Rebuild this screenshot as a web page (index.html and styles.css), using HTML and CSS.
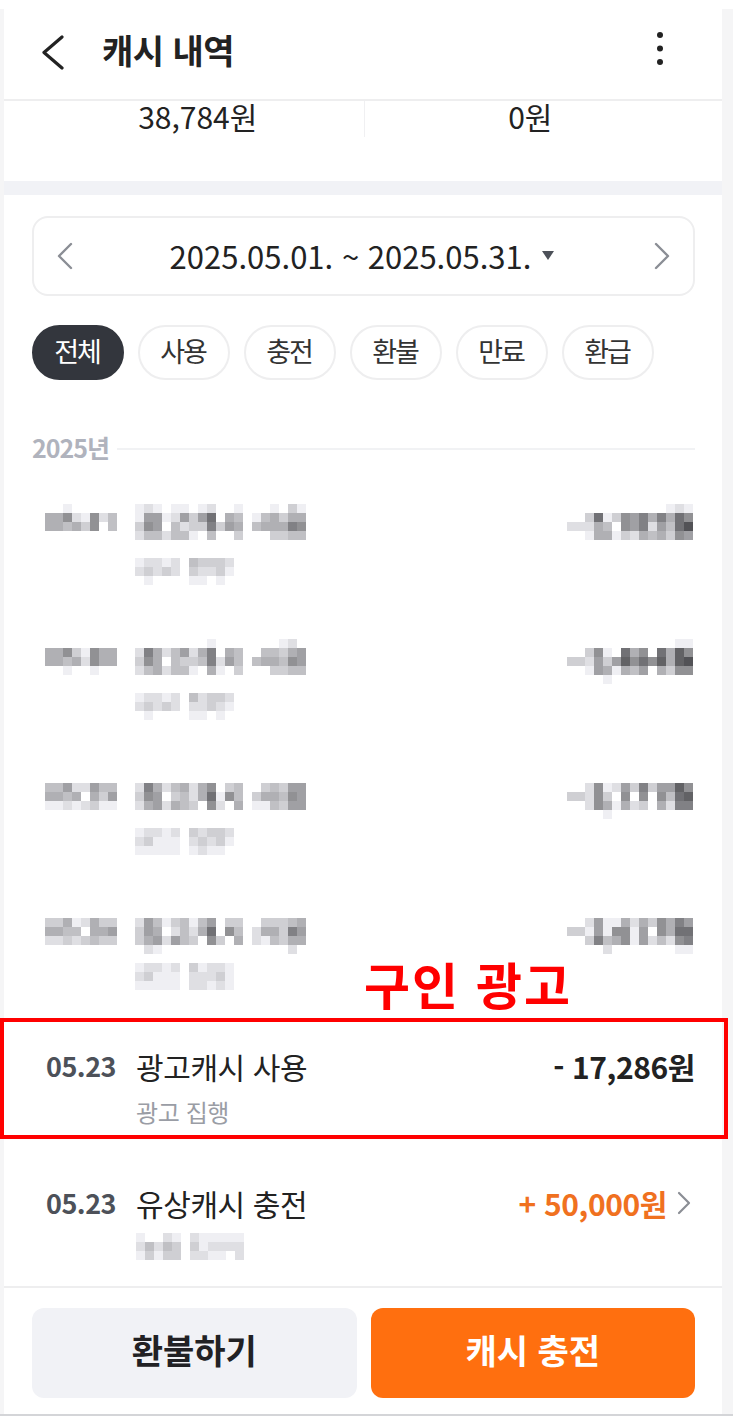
FILE: index.html
```html
<!DOCTYPE html>
<html lang="ko">
<head>
    <meta charset="UTF-8">
    <meta name="viewport" content="width=device-width, initial-scale=1.0">
    <title>캐시 내역</title>
    <link rel="stylesheet" href="styles.css">
</head>
<body>
    <div class="frame">
        <div class="app">
            <header class="top-bar">
                <svg class="back" width="24" height="36" viewBox="0 0 24 36"><path d="M21 2 L3 17.5 L21 33"/></svg>
                <h1>캐시 내역</h1>
                <svg class="more" width="8" height="36" viewBox="0 0 8 36"><circle cx="4" cy="4" r="3"/><circle cx="4" cy="17.5" r="3"/><circle cx="4" cy="31" r="3"/></svg>
            </header>

            <div class="summary">
                <div class="summary-cell">38,784원</div>
                <div class="summary-cell">0원</div>
            </div>
            <div class="strip"></div>

            <section class="content">
                <div class="period">
                    <svg class="arrow" width="18" height="28" viewBox="0 0 18 28"><path d="M15 2 L3 14 L15 26"/></svg>
                    <div class="period-label">2025.05.01. ~ 2025.05.31.<span class="caret"></span></div>
                    <svg class="arrow" width="18" height="28" viewBox="0 0 18 28"><path d="M3 2 L15 14 L3 26"/></svg>
                </div>

                <div class="chips">
                    <span class="chip active">전체</span>
                    <span class="chip">사용</span>
                    <span class="chip">충전</span>
                    <span class="chip">환불</span>
                    <span class="chip">만료</span>
                    <span class="chip">환급</span>
                </div>

                <div class="year"><span>2025년</span><i></i></div>

                <div class="list">
                    <!-- rows hidden behind the mosaic in the original -->
                    <div class="row row-first">
                        <div class="mosaic date" data-rows="ffefffff aa8de8db aabac8fb ffffffff"></div>
                        <div class="main">
                            <div class="mosaic" data-rows="edefeefedffefffefce e99ed9c96fabfebacaa c89fbdcc7c9afbaaa78 dbbdbbefbffcfffccbb f f"></div>
                            <div class="mosaic" data-rows="eddedfbcccd dcdcdfcddce feffffeefef"></div>
                        </div>
                        <div class="mosaic amount" data-rows="fffffffffffede ffc6ec897a7a68 dddabf897d9b64 ffeaaecdabac89"></div>
                    </div>
                    <div class="row">
                        <div class="mosaic date" data-rows="ffffffff aa8ce8aa aabad8aa ffeffeff"></div>
                        <div class="main">
                            <div class="mosaic" data-rows="ffffffffefffffffedf d7adb9da7fabffbbca9 c8afbccb7d9bfbaab89 dbadbbefaefcfffccbb f f"></div>
                            <div class="mosaic" data-rows="eddedfbdccd dcdcdfddcde feffffeefef"></div>
                        </div>
                        <div class="mosaic amount" data-rows="ffffffffffffee ffc8ef6a8f6a58 ccd9c958685a54 ffe9aeab9fac88 ffffefffffffff"></div>
                    </div>
                    <div class="row">
                        <div class="mosaic date" data-rows="bb9dd9bb aabafac9 eededcee"></div>
                        <div class="main">
                            <div class="mosaic" data-rows="d7adbada8fcbffcbc99 c89fcbda6e8bfcaab89 da9dabcf8dfafeebc99 f f"></div>
                            <div class="mosaic" data-rows="eddedfcdccd dceeefdcdce eeeeefedeef"></div>
                        </div>
                        <div class="mosaic amount" data-rows="ffd8ed9c7c9958 ccd8cf8f8f8b65 ffd8aeadcfad77 ffffefffffffff"></div>
                    </div>
                    <div class="row row-last">
                        <div class="mosaic date" data-rows="ccaedacc aabbfaa9 ddcdcbcc"></div>
                        <div class="main">
                            <div class="mosaic" data-rows="d9becbeb9fccffcccba c9afdbda6f8bfdaac79 ca9d9bcf8cfafdebcaa fdeffffffffffffffdf f"></div>
                            <div class="mosaic" data-rows="eddedfcedde dceeefdddce eeeeefddede"></div>
                        </div>
                        <div class="mosaic amount" data-rows="ffd9eeadac8a79 cce9e88e9f8a66 ffc7ba8e9dbd87 ffffdfffffffee"></div>
                    </div>

                    <div class="row row-text">
                        <div class="date">05.23</div>
                        <div class="main">
                            <div class="title">광고캐시 사용</div>
                            <div class="sub">광고 집행</div>
                        </div>
                        <div class="price">- 17,286원</div>
                    </div>
                    <div class="row row-text">
                        <div class="date">05.23</div>
                        <div class="main">
                            <div class="title">유상캐시 충전</div>
                            <div class="mosaic sub-mosaic" data-rows="effdefdeeeee dbdbcfcedddd ececcfddeefd"></div>
                        </div>
                        <div class="price plus">+ 50,000원<svg class="go" width="14" height="24" viewBox="0 0 14 24"><path d="M2 2 L12 12 L2 22"/></svg></div>
                    </div>
                </div>
            </section>

            <footer class="actions">
                <button class="btn">환불하기</button>
                <button class="btn primary">캐시 충전</button>
            </footer>
        </div>
    </div>

    <!-- red annotation drawn over the screenshot -->
    <div class="note">구인 광고</div>
    <div class="note-box"></div>

    <script src="mosaic.js"></script>
</body>
</html>
```

FILE: styles.css
```css
* { box-sizing: border-box; }
html, body { height: 100%; }
body {
    margin: 0;
    background: #fff;
    font-family: "Noto Sans CJK KR", "Noto Sans", sans-serif;
    color: #222;
    overflow: hidden;
    position: relative;
}
.frame {
    margin-top: 9px;
    height: 1407px;
    padding: 0 11px 0 4px;
    background: #f5f5f6;
    border-bottom: 2px solid #d4d5d8;
}
.app {
    height: 100%;
    background: #fff;
    display: flex;
    flex-direction: column;
}

/* header */
.top-bar {
    height: 92px;
    flex: none;
    display: flex;
    align-items: center;
    padding: 0 58px 0 37px;
    border-bottom: 2px solid #eeeeef;
}
.top-bar h1 {
    margin: 0 0 8px 37px;
    flex: 1;
    font-size: 34px;
    font-weight: 700;
    letter-spacing: -0.5px;
    line-height: 40px;
    color: #222;
}
.back { margin-bottom: 2px; }
.back path { fill: none; stroke: #222; stroke-width: 3.2; stroke-linecap: round; stroke-linejoin: round; }
.more { fill: #222; margin-bottom: 10px; }

/* summary */
.summary {
    height: 80px;
    flex: none;
    display: flex;
    align-items: flex-start;
}
.summary-cell {
    flex: 1;
    height: 36px;
    line-height: 30px;
    font-size: 30px;
    text-align: center;
    padding-right: 26px;
}
.summary-cell:first-child {
    padding: 0 0 0 28px;
    border-right: 1px solid #f0f0f2;
}
.strip { height: 14px; flex: none; background: #f1f2f6; }

/* period + filters */
.content {
    flex: 1;
    min-height: 0;
    overflow: hidden;
    padding: 21px 27px 0 28px;
}
.period {
    height: 80px;
    border: 2px solid #eeeeef;
    border-radius: 16px;
    display: flex;
    align-items: center;
    justify-content: space-between;
    padding: 0 22px;
}
.period-label {
    font-size: 31px;
    color: #222;
    display: flex;
    align-items: center;
    margin: 0 3px 1px 0;
}
.caret {
    width: 0;
    height: 0;
    margin-left: 11px;
    border-left: 6px solid transparent;
    border-right: 6px solid transparent;
    border-top: 9px solid #4d5159;
}
.arrow path { fill: none; stroke: #8b8e95; stroke-width: 2.4; stroke-linecap: round; stroke-linejoin: round; }
.chips {
    display: flex;
    gap: 14px;
    margin-top: 29px;
}
.chip {
    width: 92px;
    height: 55px;
    padding: 0 2px 4px 0;
    border: 2px solid #eeeeef;
    border-radius: 28px;
    display: flex;
    align-items: center;
    justify-content: center;
    font-size: 27px;
    letter-spacing: -2px;
    color: #333;
}
.chip.active {
    background: #33363d;
    border-color: #33363d;
    color: #fff;
}
.year {
    display: flex;
    align-items: center;
    gap: 8px;
    height: 28px;
    margin-top: 55px;
    font-size: 25px;
    font-weight: 700;
    letter-spacing: -1px;
    color: #b0b3bd;
}
.year span { margin-top: -4px; }
.year i {
    flex: 1;
    height: 2px;
    background: #f1f2f4;
}

/* history list */
.list { margin-top: 41px; }
.row {
    display: flex;
    align-items: flex-start;
    justify-content: space-between;
    padding-left: 13px;
    margin-bottom: 63px;
}
.row-first { margin-bottom: 54px; }
.row-last { margin-bottom: 59px; }
.row-text { padding-left: 14px; margin-bottom: 61px; }
.date {
    width: 90px;
    flex: none;
    font-size: 27px;
    font-weight: 700;
    line-height: 34px;
    letter-spacing: -0.5px;
    color: #4d5159;
}
.main { flex: 1; }
.title { font-size: 30px; line-height: 34px; letter-spacing: -0.4px; color: #222; }
.sub { font-size: 24px; line-height: 26px; margin-top: 16px; letter-spacing: -0.4px; color: #9a9da5; }
.sub-mosaic { margin-top: 13px; }
.price {
    display: flex;
    align-items: center;
    font-size: 30px;
    font-weight: 700;
    line-height: 34px;
    letter-spacing: -0.4px;
    color: #222;
}
.price.plus { color: #f0711f; }
.go { margin-left: 10px; margin-right: 4px; }
.go path { fill: none; stroke: #8b8e95; stroke-width: 2.2; stroke-linecap: round; stroke-linejoin: round; }
.mosaic svg { display: block; opacity: 0.92; }
.amount { margin-right: 2px; }

/* bottom buttons */
.actions {
    flex: none;
    display: flex;
    gap: 14px;
    padding: 20px 27px 16px 28px;
    border-top: 2px solid #eeeeef;
}
.btn {
    flex: 1;
    height: 90px;
    padding: 0 0 7px;
    border: none;
    border-radius: 12px;
    background: #f1f2f6;
    font-family: inherit;
    font-size: 34px;
    font-weight: 700;
    color: #212124;
}
.btn.primary { background: #ff6f0f; color: #fff; }

/* annotation */
.note {
    position: absolute;
    left: 364px;
    top: 948px;
    font-family: "Noto Sans CJK KR", sans-serif;
    font-size: 50px;
    font-weight: 700;
    line-height: 70px;
    letter-spacing: 2px;
    color: #ff0000;
    white-space: nowrap;
}
.note-box {
    position: absolute;
    left: 0;
    top: 1018px;
    width: 728px;
    height: 121px;
    border: 4px solid #ff0000;
}
```

FILE: mosaic.js
```js
// draws the pixelated (censored) blocks from rows of grey levels, one hex digit per 9px cell
const SVG_NS = 'http://www.w3.org/2000/svg';
const CELL = 9;

document.querySelectorAll('.mosaic').forEach(el => {
    const rows = el.dataset.rows.split(' ');
    const cols = Math.max(...rows.map(r => r.length));
    const svg = document.createElementNS(SVG_NS, 'svg');
    svg.setAttribute('width', cols * CELL);
    svg.setAttribute('height', rows.length * CELL);
    svg.setAttribute('shape-rendering', 'crispEdges');

    rows.forEach((row, y) => {
        [...row].forEach((digit, x) => {
            if (digit === 'f') {
                return;
            }
            const level = parseInt(digit, 16) * 17;
            const rect = document.createElementNS(SVG_NS, 'rect');
            rect.setAttribute('x', x * CELL);
            rect.setAttribute('y', y * CELL);
            rect.setAttribute('width', CELL);
            rect.setAttribute('height', CELL);
            rect.setAttribute('fill', `rgb(${level},${level},${level + 4})`);
            svg.appendChild(rect);
        });
    });

    el.appendChild(svg);
});
```
